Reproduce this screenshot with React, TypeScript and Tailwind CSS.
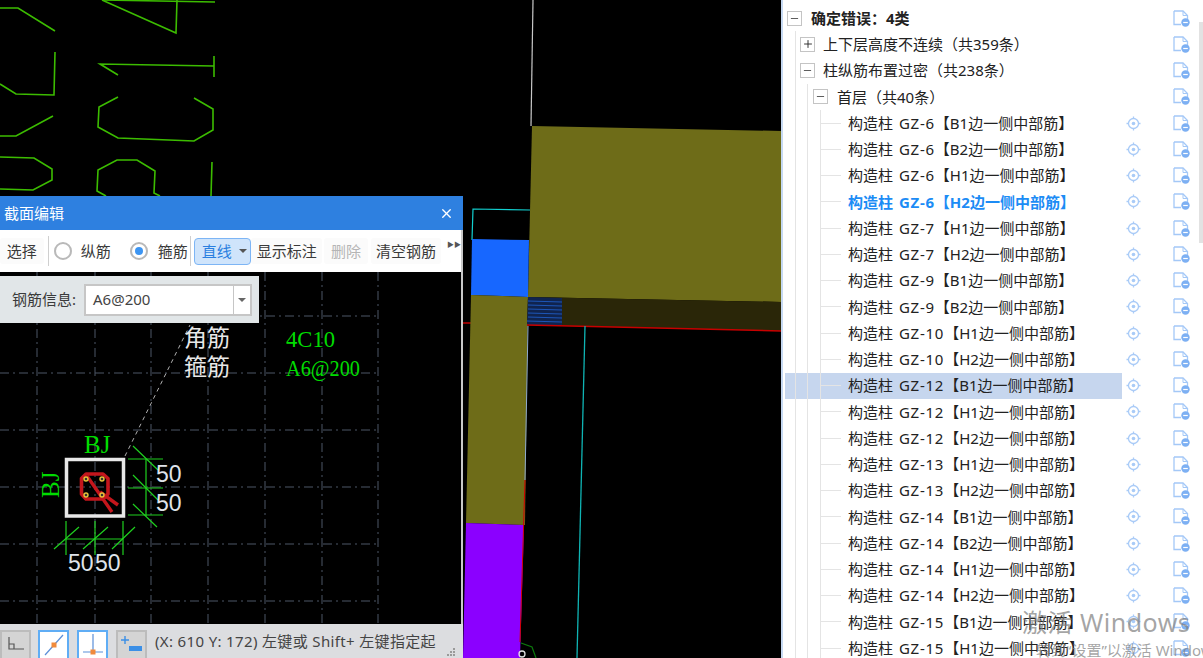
import { Plus, Minus, X } from "lucide-react";

const font = { fontFamily: '"Noto Sans", "Noto Sans CJK SC", sans-serif' };

type Leaf = { gz: string; side: string; active?: boolean; selected?: boolean };

const leaves: Leaf[] = [
  { gz: "GZ-6", side: "B1" },
  { gz: "GZ-6", side: "B2" },
  { gz: "GZ-6", side: "H1" },
  { gz: "GZ-6", side: "H2", active: true },
  { gz: "GZ-7", side: "H1" },
  { gz: "GZ-7", side: "H2" },
  { gz: "GZ-9", side: "B1" },
  { gz: "GZ-9", side: "B2" },
  { gz: "GZ-10", side: "H1" },
  { gz: "GZ-10", side: "H2" },
  { gz: "GZ-12", side: "B1", selected: true },
  { gz: "GZ-12", side: "H1" },
  { gz: "GZ-12", side: "H2" },
  { gz: "GZ-13", side: "H1" },
  { gz: "GZ-13", side: "H2" },
  { gz: "GZ-14", side: "B1" },
  { gz: "GZ-14", side: "B2" },
  { gz: "GZ-14", side: "H1" },
  { gz: "GZ-14", side: "H2" },
  { gz: "GZ-15", side: "B1" },
  { gz: "GZ-15", side: "H1" },
];

function LocateIcon() {
  return (
    <svg width="15" height="15" viewBox="0 0 15 15" fill="none" stroke="#a9cbf7" strokeWidth="1.3">
      <circle cx="7.5" cy="7.5" r="5" />
      <circle cx="7.5" cy="7.5" r="1.8" fill="#a9cbf7" stroke="none" />
      <path d="M7.5 0.5v2M7.5 12.5v2M0.5 7.5h2M12.5 7.5h2" />
    </svg>
  );
}

function DocIcon() {
  return (
    <svg width="17" height="17" viewBox="0 0 17 17" fill="none">
      <path d="M1 1h9l4.5 4.5v4M1 1v13.5h7" stroke="#a4c8f7" strokeWidth="1.3" />
      <path d="M10 1v4.5h4.5" stroke="#a4c8f7" strokeWidth="1" />
      <circle cx="12.5" cy="12.5" r="4.2" fill="#7db0f3" />
      <path d="M10.2 12.5h4.6" stroke="#fff" strokeWidth="1.2" />
    </svg>
  );
}

function Guide({ w }: { w: string }) {
  return <span className={`${w} shrink-0 self-stretch border-l border-[#e4e4e4]`} />;
}

function Expander({ open }: { open: boolean }) {
  return (
    <span className="w-[15px] h-[15px] shrink-0 border border-[#c4c4c4] bg-white flex items-center justify-center text-[#222]">
      {open ? <Minus size={11} strokeWidth={1.6} /> : <Plus size={12} strokeWidth={1.8} />}
    </span>
  );
}

function Row({
  children,
  selected,
  locate,
}: {
  children: React.ReactNode;
  selected?: boolean;
  locate?: boolean;
}) {
  return (
    <div className="flex h-[26.25px]">
      <div className={`w-[337px] flex items-center whitespace-nowrap ${selected ? "bg-[#c6d6ee]" : ""}`}>
        {children}
      </div>
      <div className="w-[23px] flex items-center justify-center">{locate && <LocateIcon />}</div>
      <div className="w-[45px] flex items-center justify-end">
        <DocIcon />
      </div>
    </div>
  );
}

function TreePanel() {
  return (
    <div className="relative flex-1 bg-white border-l-2 border-[#c6d9f2] pl-[2px] pt-[5px] text-[15px] text-[#222] overflow-hidden">
      <Row>
        <span className="ml-[2px]" />
        <Expander open />
        <span className="ml-[9px] font-bold">确定错误：4类</span>
      </Row>
      <Row>
        <span className="ml-[10px]" />
        <Guide w="w-[5px]" />
        <Expander open={false} />
        <span className="ml-[8px]">上下层高度不连续（共359条）</span>
      </Row>
      <Row>
        <span className="ml-[10px]" />
        <Guide w="w-[5px]" />
        <Expander open />
        <span className="ml-[8px]">柱纵筋布置过密（共238条）</span>
      </Row>
      <Row>
        <span className="ml-[10px]" />
        <Guide w="w-[12px]" />
        <Guide w="w-[6px]" />
        <Expander open />
        <span className="ml-[9px]">首层（共40条）</span>
      </Row>
      {leaves.map((l, i) => (
        <Row key={i} selected={l.selected} locate>
          <span className="ml-[10px]" />
          <Guide w="w-[12px]" />
          <Guide w="w-[13px]" />
          <span className="flex items-center self-stretch border-l border-[#e4e4e4] w-[21px] shrink-0">
            <span className="h-px w-full bg-[#e4e4e4]" />
          </span>
          <span className={`ml-[7px] [word-spacing:2px] ${l.active ? "font-bold text-[#1c8cf5]" : ""}`}>
            构造柱 <span className="tracking-[0.75px]">{l.gz}</span>【{l.side}边一侧中部筋】
          </span>
        </Row>
      ))}
      {/* scrollbar */}
      <div className="absolute right-0 top-[22px] w-[4px] h-[221px] bg-[#e2e2e2]" />
    </div>
  );
}

function CadBackground() {
  return (
    <svg className="absolute inset-0" width="781" height="658" viewBox="0 0 781 658" fill="none">
      <g stroke="#3cbc00" strokeWidth="1.6">
        <path d="M0 8H18L55 31" />
        <path d="M55 52L54 95L16 94L0 84" />
        <path d="M53 116L16 136H0" />
        <path d="M0 157L34 158L52 169V180L33 190L0 189" />
        <path d="M102 0L215 2" />
        <path d="M102 0L176 33L177 0" />
        <path d="M118 75L100 64L214 66" />
        <path d="M214 56V77" />
        <path d="M118 97L99 107L98 127L118 138L194 141L213 130V109L194 98" />
        <path d="M212 162L211 196" />
        <path d="M106 196L97 191L98 170L117 160H137L155 171L154 193L160 196" />
      </g>
      <path d="M533 0L531 126" stroke="#c8c8c8" strokeWidth="1.2" />
      <path d="M530 210L473 209L472 240" stroke="#12d0d0" strokeWidth="1.2" />
      <path d="M463 323L471 323" stroke="#d00000" strokeWidth="1.4" />
      <path d="M532 126L781 131V302L528 297Z" fill="#6e6c18" />
      <path d="M472 239L529 240L528 297L471 295Z" fill="#1767ff" />
      <path d="M471 295L528 297L525 525L466 523Z" fill="#6e6c18" />
      <path d="M466 523L524 525L520 658H463Z" fill="#8b00ff" />
      <path d="M528 297L781 302V331L527 325Z" fill="#2a2608" />
      <path d="M528 297L562 298V325L527 325Z" fill="#10244f" />
      <path
        d="M528 301L562 302M528 305L562 306M528 309L562 310M528 313L562 314M528 317L562 318M527 321L562 322"
        stroke="#1d56b8"
      />
      <path d="M527 325L781 331" stroke="#c80000" strokeWidth="1.5" />
      <path d="M528 326L525 480" stroke="#8faad0" />
      <path d="M525 480L520 642" stroke="#d00000" />
      <path d="M585 326L577 658" stroke="#0fb4b4" strokeWidth="1.3" />
      <path d="M521 643L532 647L536 658" stroke="#0c7a0c" strokeWidth="1.2" />
      <circle cx="522" cy="654" r="3" stroke="#e0e0e0" strokeWidth="1.3" />
    </svg>
  );
}

function SectionDrawing() {
  const grey = "#4d5666";
  return (
    <svg className="absolute inset-0" width="461" height="352" viewBox="0 272 461 352" fill="none">
      <g stroke={grey} strokeDasharray="9 4 2 4">
        {[37, 95, 151, 208, 265, 322, 378].map((x) => (
          <path key={x} d={`M${x} 272V624`} />
        ))}
        {[316, 373, 430, 487, 544, 601].map((y) => (
          <path key={y} d={`M0 ${y}H377`} />
        ))}
      </g>
      <path d="M125 456L190 325" stroke="#b0b0b0" strokeDasharray="4 4" />
      <g style={{ fontFamily: '"Liberation Serif", "Noto Sans CJK SC", serif' }} fontSize="23">
        <text x="184" y="346" fill="#e8e8e8">角筋</text>
        <text x="184" y="375" fill="#e8e8e8">箍筋</text>
        <text x="286" y="347" fill="#00dc00" textLength="49" lengthAdjust="spacingAndGlyphs">4C10</text>
        <text x="286" y="376" fill="#00dc00" textLength="74" lengthAdjust="spacingAndGlyphs">A6@200</text>
        <text x="84" y="453" fill="#00dc00" fontSize="25">BJ</text>
        <text x="0" y="0" fill="#00dc00" fontSize="25" transform="translate(59 498) rotate(-90)">BJ</text>
      </g>
      <rect x="66.5" y="459.5" width="57" height="56.5" stroke="#e8e8e8" strokeWidth="3.5" />
      <path
        d="M86 474H103L108 478.5V494L103 499H86L81.5 494V478.5Z"
        stroke="#c4161c"
        strokeWidth="3.6"
        strokeLinejoin="round"
      />
      <path d="M87 476L112 512M100 492L118 505" stroke="#c4161c" strokeWidth="3.4" />
      {[[86, 479], [102, 479], [86, 495], [102, 495]].map(([cx, cy]) => (
        <circle key={`${cx}${cy}`} cx={cx} cy={cy} r="2" fill="#333" stroke="#e8c33a" strokeWidth="1.4" />
      ))}
      <g stroke="#1fd01f" strokeWidth="1.2">
        <path d="M128 459H163M128 488H163M128 515H163M146 459V516" />
        <path d="M133 446L158 470M133 475L158 500M133 504L157 527" />
        <path d="M66 521V555M95 521V555M123 521V555M66 539H123" />
        <path d="M79 527L54 549M108 527L83 549M135 527L112 549" />
      </g>
      <g style={{ fontFamily: '"Liberation Sans", sans-serif' }} fontSize="23" fill="#dfe3ea">
        <text x="156" y="482">50</text>
        <text x="156" y="511">50</text>
        <text x="68" y="571">50</text>
        <text x="95" y="571">50</text>
      </g>
    </svg>
  );
}

function ToolText({ w, children, muted }: { w: string; children: string; muted?: boolean }) {
  return (
    <button className={`${w} h-[26px] rounded-[3px] bg-[#fbfbfb] flex items-center justify-center ${muted ? "text-[#b5b5b5]" : ""}`}>
      {children}
    </button>
  );
}

function Radio({ on }: { on?: boolean }) {
  return (
    <span className="w-[18px] h-[18px] rounded-full border-2 border-[#b9b9b9] bg-white flex items-center justify-center">
      {on && <span className="w-[8px] h-[8px] rounded-full bg-[#3d95f2]" />}
    </span>
  );
}

function StatusButton({ on, children }: { on?: boolean; children: React.ReactNode }) {
  return (
    <span
      className={`w-[31px] h-[28px] flex items-center justify-center border-2 border-b-0 ${
        on ? "bg-white border-[#5fadf5]" : "bg-[#d4d4d4] border-[#bcbcbc]"
      }`}
    >
      {children}
    </span>
  );
}

function EditorWindow() {
  return (
    <div className="absolute left-0 top-[196px] w-[463px] h-[462px] flex flex-col bg-[#c9c9c9] text-[15px] text-[#3a3a3a]">
      <div className="h-[34px] shrink-0 bg-[#2e80e0] flex items-center justify-between pl-[4px] pr-[9px] text-white">
        <span>截面编辑</span>
        <X size={15} strokeWidth={2.2} />
      </div>
      <div className="h-[42px] shrink-0 mr-[2px] bg-white flex items-center whitespace-nowrap">
        <ToolText w="w-[44px]">选择</ToolText>
        <span className="ml-[4px] w-px h-[30px] bg-[#cfcfcf]" />
        <span className="ml-[5px]"><Radio /></span>
        <span className="ml-[9px]">纵筋</span>
        <span className="ml-[19px]"><Radio on /></span>
        <span className="ml-[10px]">箍筋</span>
        <span className="ml-[2px] w-px h-[30px] bg-[#cfcfcf]" />
        <button className="ml-[3px] w-[58px] h-[27px] rounded-[4px] bg-[#cfe4fb] border border-[#7db5f5] text-[#2a7fe0] flex items-center pl-[7px]">
          直线
          <span className="ml-[7px] w-0 h-0 border-x-[4px] border-x-transparent border-t-[4px] border-t-[#555]" />
        </button>
        <ToolText w="w-[71px]">显示标注</ToolText>
        <span className="ml-[2px]"><ToolText w="w-[44px]" muted>删除</ToolText></span>
        <span className="ml-[3px]"><ToolText w="w-[70px]">清空钢筋</ToolText></span>
        <span className="ml-[6px] mb-[12px] text-[7px] text-[#555]">▶▶</span>
      </div>
      <div className="relative flex-1 mr-[2px] bg-black">
        <SectionDrawing />
        <div className="absolute left-0 top-[4px] w-[259px] h-[47px] bg-[#e1e6e8] flex items-center pl-[12px]">
          <span>钢筋信息:</span>
          <div className="ml-[8px] w-[168px] h-[32px] bg-white border-2 border-[#c6c6c6] flex items-center">
            <span className="flex-1 pl-[7px] text-[#444]">A6@200</span>
            <span className="w-[17px] h-full border-l border-[#c6c6c6] flex items-center justify-center">
              <span className="w-0 h-0 border-x-[4px] border-x-transparent border-t-[4px] border-t-[#666]" />
            </span>
          </div>
        </div>
      </div>
      <div className="h-[34px] shrink-0 bg-[#dcdde0] flex items-end whitespace-nowrap">
        <span className="w-[30px]">
          <StatusButton>
            <svg width="18" height="18" viewBox="0 0 18 18" fill="none" stroke="#555" strokeWidth="1.2">
              <path d="M2 1V13H17M2 8H7V13" />
            </svg>
          </StatusButton>
        </span>
        <span className="ml-[8px]">
          <StatusButton on>
            <svg width="22" height="24" viewBox="0 0 22 24" fill="none">
              <path d="M2 22L20 2" stroke="#5b8fd8" strokeWidth="1.2" />
              <rect x="8.5" y="9.5" width="5" height="5" fill="#f08a3c" />
            </svg>
          </StatusButton>
        </span>
        <span className="ml-[8px]">
          <StatusButton on>
            <svg width="22" height="24" viewBox="0 0 22 24" fill="none">
              <path d="M11 1V19M1 19H21" stroke="#5b8fd8" strokeWidth="1.2" />
              <rect x="8.5" y="16.5" width="5" height="5" fill="#f08a3c" />
            </svg>
          </StatusButton>
        </span>
        <span className="ml-[8px]">
          <StatusButton>
            <svg width="24" height="24" viewBox="0 0 24 24" fill="none">
              <path d="M1 7H9M5 3V11" stroke="#3b8fe6" strokeWidth="1.4" />
              <rect x="9" y="13" width="13" height="5" fill="#3b8fe6" />
            </svg>
          </StatusButton>
        </span>
        <span className="ml-[8px] self-center text-[#444] tracking-[0.35px]">(X: 610 Y: 172) 左键或 Shift+ 左键指定起</span>
        <svg className="ml-[10px] mb-[1px]" width="10" height="10" viewBox="0 0 10 10" fill="#9a9a9a">
          <rect x="7" y="1" width="2" height="2" />
          <rect x="4" y="4" width="2" height="2" />
          <rect x="7" y="4" width="2" height="2" />
          <rect x="1" y="7" width="2" height="2" />
          <rect x="4" y="7" width="2" height="2" />
          <rect x="7" y="7" width="2" height="2" />
        </svg>
      </div>
    </div>
  );
}

export default function App() {
  return (
    <div className="relative w-[1203px] h-[658px] flex overflow-hidden bg-black" style={font}>
      <div className="relative w-[781px] shrink-0 bg-black">
        <CadBackground />
        <EditorWindow />
      </div>
      <TreePanel />
      {/* windows activation watermark */}
      <div className="absolute left-[1022px] top-[604px] w-[260px] text-[#7d7d7d]/70 whitespace-nowrap">
        <div className="text-[25px] leading-[36px] tracking-[0.5px]">激活 Windows</div>
        <div className="ml-[14px] text-[15px] leading-[20px]">转到“设置”以激活 Windows。</div>
      </div>
    </div>
  );
}
